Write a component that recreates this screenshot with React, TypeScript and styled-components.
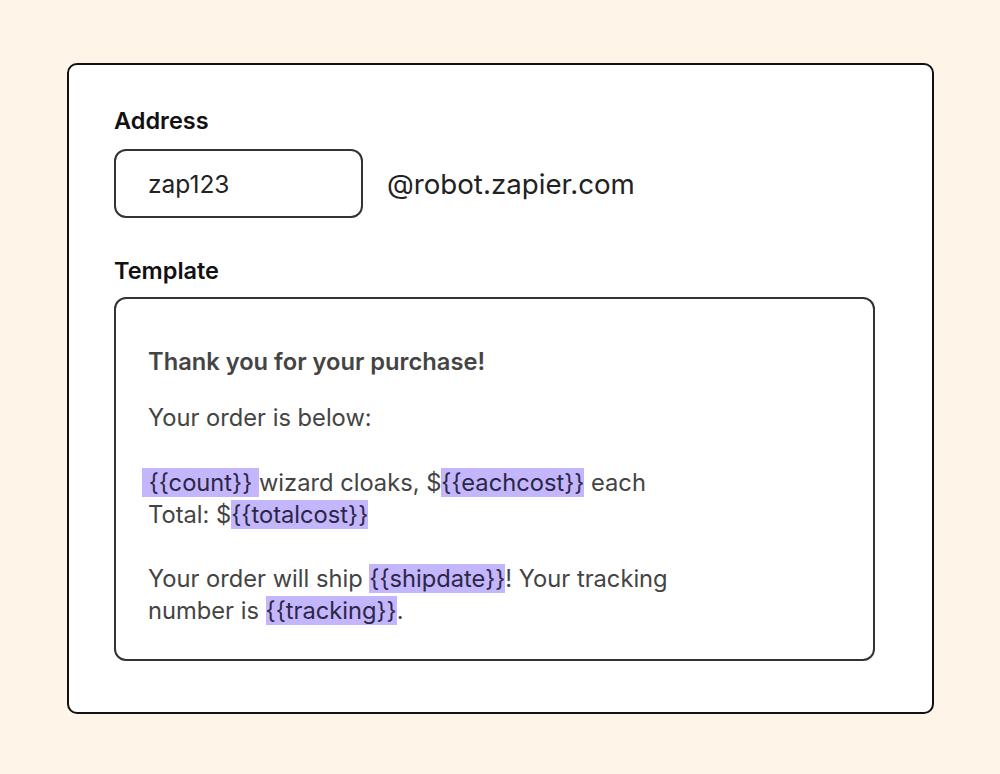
import React from "react"
import styled, { createGlobalStyle } from "styled-components"

const GlobalStyle = createGlobalStyle`
  html, body {
    margin: 0;
    padding: 0;
    background: #fff4e8;
    font-family: Inter, "Noto Sans", sans-serif;
  }
`

const Page = styled.main`
  width: 1000px;
  height: 774px;
  box-sizing: border-box;
  padding: 63px 67px 0;
`

const Card = styled.section`
  box-sizing: border-box;
  width: 867px;
  height: 651px;
  background: #ffffff;
  border: 2px solid #111;
  border-radius: 10px;
  padding: 42px 45px 0;
  display: flex;
  flex-direction: column;
`

const Label = styled.h3`
  margin: 0;
  font-size: 23.5px;
  font-weight: 600;
  color: #111;
  line-height: 28px;
`

const AddressRow = styled.div`
  display: flex;
  align-items: center;
  gap: 24px;
  margin: 14px 0 39px;
`

const Input = styled.div`
  box-sizing: border-box;
  width: 249px;
  height: 69px;
  border: 2px solid #333;
  border-radius: 12px;
  padding: 0 32px;
  display: flex;
  align-items: center;
  font-size: 24.5px;
  color: #222;
`

const Domain = styled.span`
  font-size: 27.7px;
  color: #222;
`

const TemplateBox = styled.div`
  box-sizing: border-box;
  width: 761px;
  height: 364px;
  margin-top: 12px;
  border: 2px solid #333;
  border-radius: 12px;
  padding: 47px 32px 0;
  color: #444;
  font-size: 23.7px;
  line-height: 32px;
`

const Para = styled.p<{ $gap?: number }>`
  margin: 0 0 ${(p) => p.$gap ?? 0}px;
`

const Heading = styled(Para)`
  font-weight: 600;
`

const Tag = styled.span<{ $lead?: boolean }>`
  background: #c4b6fc;
  color: #2b2745;
  ${(p) => (p.$lead ? "margin-left: -6px;" : "")}
`

export default function App() {
  return (
    <>
      <GlobalStyle />
      <Page>
        <Card>
          <Label>Address</Label>
          <AddressRow>
            <Input>zap123</Input>
            <Domain>@robot.zapier.com</Domain>
          </AddressRow>
          <Label>Template</Label>
          <TemplateBox>
            <Heading $gap={24}>Thank you for your purchase!</Heading>
            <Para $gap={33}>Your order is below:</Para>
            <Para $gap={32}>
              <Tag $lead>&nbsp;{"{{count}}"}&nbsp;</Tag>wizard cloaks, $<Tag>{"{{eachcost}}"}</Tag> each
              <br />
              Total: $<Tag>{"{{totalcost}}"}</Tag>
            </Para>
            <Para>
              Your order will ship <Tag>{"{{shipdate}}"}</Tag>! Your tracking
              <br />
              number is <Tag>{"{{tracking}}"}</Tag>.
            </Para>
          </TemplateBox>
        </Card>
      </Page>
    </>
  )
}
